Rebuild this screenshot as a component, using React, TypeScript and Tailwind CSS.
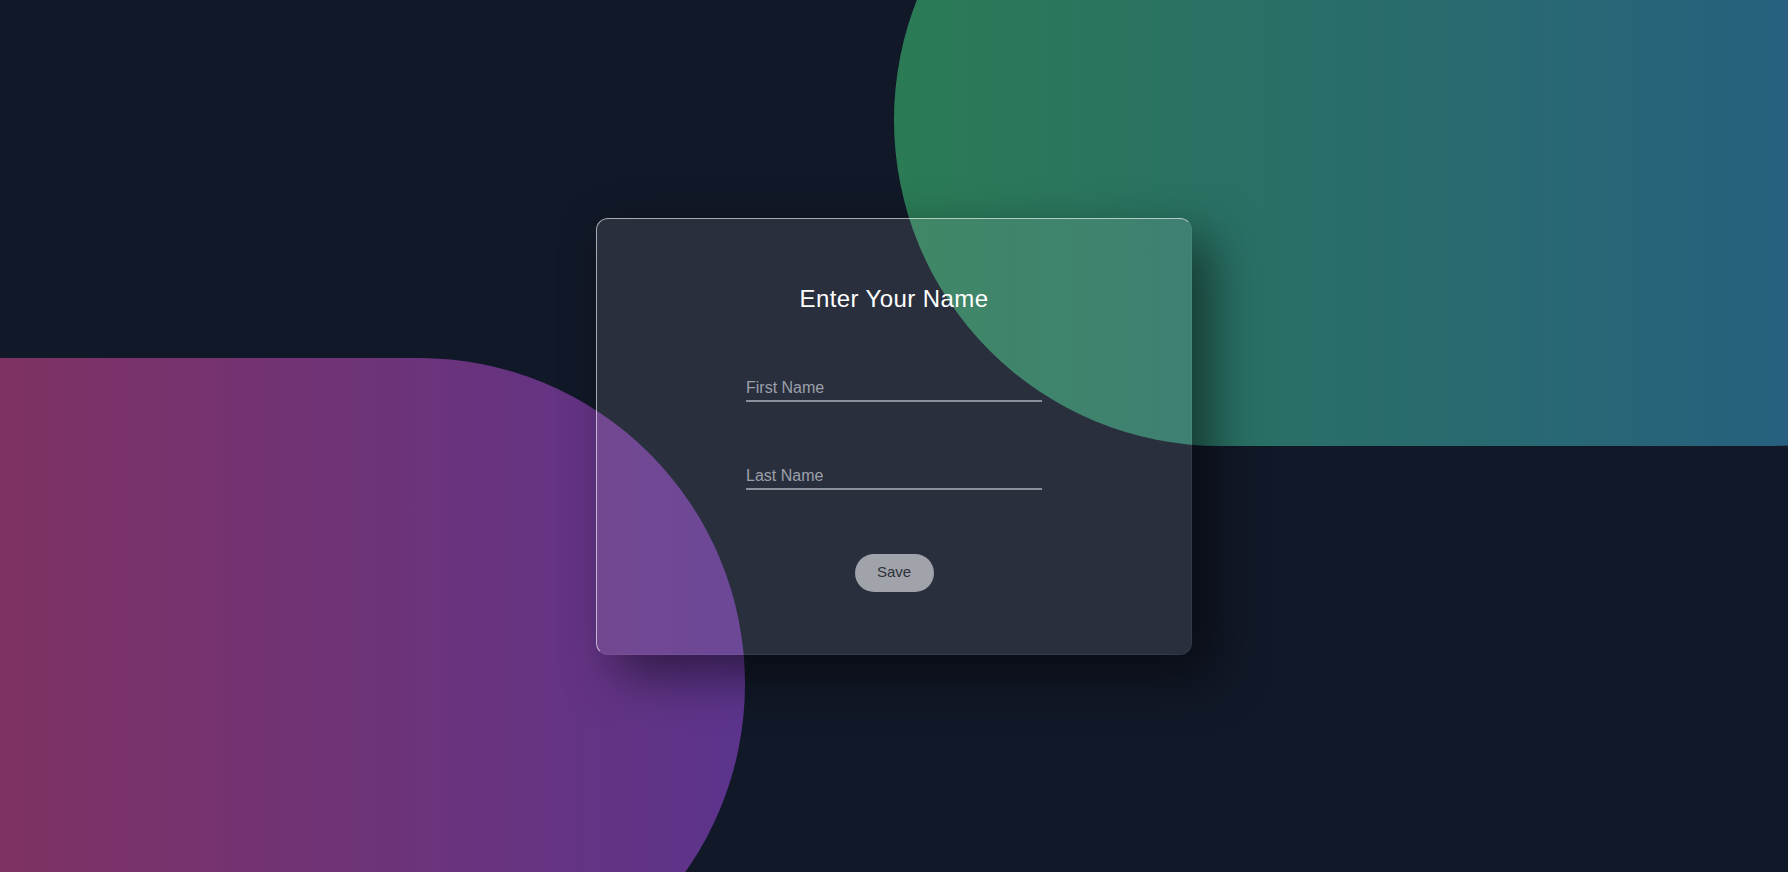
import { useState } from "react";

export default function App() {
  const [first, setFirst] = useState("");
  const [last, setLast] = useState("");

  return (
    <div className="relative flex h-screen w-full items-center justify-center overflow-hidden bg-[#111827] font-['Liberation_Sans',Arial,sans-serif]">
      {/* background blobs */}
      <div className="pointer-events-none absolute left-[894px] top-[-206px] h-[652px] w-[1200px] rounded-full bg-linear-to-r/srgb from-[#2b7b55] to-[#26578d]" />
      <div className="pointer-events-none absolute left-[-455px] top-[358px] h-[652px] w-[1200px] rounded-full bg-linear-to-r/srgb from-[#943149] to-[#5c348d]" />

      <form
        onSubmit={(e) => e.preventDefault()}
        className="relative z-10 flex h-[437px] w-[596px] flex-col items-center rounded-xl border border-white/5 border-t-white/60 border-l-white/60 bg-white/10 pt-[64px] shadow-[20px_20px_50px_rgba(0,0,0,0.5)]"
      >
        <h2 className="text-2xl leading-8 tracking-[0.4px] text-white">Enter Your Name</h2>

        <input
          value={first}
          onChange={(e) => setFirst(e.target.value)}
          placeholder="First Name"
          className="mt-[61px] h-[26px] w-[296px] border-b-2 border-[#8c909b] bg-transparent text-base text-white outline-none placeholder:text-[#9ca0aa]"
        />
        <input
          value={last}
          onChange={(e) => setLast(e.target.value)}
          placeholder="Last Name"
          className="mt-[62px] h-[26px] w-[296px] border-b-2 border-[#8c909b] bg-transparent text-base text-white outline-none placeholder:text-[#9ca0aa]"
        />

        <button
          type="submit"
          className="mt-[64px] h-[38px] w-[79px] rounded-full bg-[#a1a3ab] text-[15px] text-[#2f3138]"
        >
          Save
        </button>
      </form>
    </div>
  );
}
